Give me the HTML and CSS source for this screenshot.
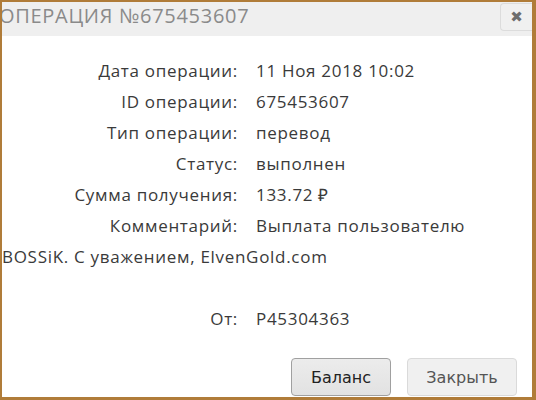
FILE: index.html
```html
<!DOCTYPE html>
<html lang="ru">
  <head>
    <meta charset="UTF-8" />
    <title>Операция №675453607</title>
    <link rel="stylesheet" href="styles.css">
  </head>
  <body>
    <div class="dialog">
      <div class="titlebar">
        <span class="title">Операция №675453607</span>
        <button class="close" title="Закрыть">&#10006;</button>
      </div>
      <div class="content">
        <div class="row"><span class="label">Дата операции:</span>11 Ноя 2018 10:02</div>
        <div class="row"><span class="label">ID операции:</span>675453607</div>
        <div class="row"><span class="label">Тип операции:</span>перевод</div>
        <div class="row"><span class="label">Статус:</span>выполнен</div>
        <div class="row"><span class="label">Сумма получения:</span>133.72 ₽</div>
        <div class="row"><span class="label">Комментарий:</span><span>Выплата пользователю</span> <span>BOSSiK. С уважением, ElvenGold.com</span></div>
        <div class="row empty"></div>
        <div class="row"><span class="label">От:</span>P45304363</div>
      </div>
      <div class="buttons">
        <button class="btn">Баланс</button>
        <button class="btn btn-light">Закрыть</button>
      </div>
    </div>
  </body>
</html>
```

FILE: styles.css
```css
html,
body {
  margin: 0;
  padding: 0;
  background: #fff;
}

.dialog {
  box-sizing: border-box;
  width: 536px;
  height: 400px;
  border: 2px solid #b07c39;
  border-right-width: 4px;
  border-bottom-width: 3px;
  display: flex;
  flex-direction: column;
  overflow: hidden;
}

.titlebar {
  height: 34px;
  background-color: #efefef;
  display: flex;
  align-items: flex-start;
  justify-content: space-between;
}

.title {
  font-family: "Open Sans", sans-serif;
  font-size: 20px;
  letter-spacing: 0.7px;
  text-transform: uppercase;
  color: #8a8a8a;
  line-height: 28px;
  margin-left: -3px;
}

.close {
  margin-top: 1px;
  width: 32px;
  height: 28px;
  border: 1px solid #dcdcdc;
  border-right: none;
  border-radius: 4px 0 0 4px;
  background-color: #f0f0f0;
  color: #6d6d6d;
  font-size: 15px;
  font-weight: bold;
  padding: 0;
  font-family: "DejaVu Sans", sans-serif;
  cursor: pointer;
}

.content {
  flex: 1;
  padding-top: 19px;
  font-family: "Open Sans", sans-serif;
  font-size: 17px;
  letter-spacing: 0.7px;
  color: #3a3a3a;
}

.row {
  line-height: 31px;
}

.empty {
  height: 31px;
}

.label {
  display: inline-block;
  width: 236px;
  padding-right: 18px;
  text-align: right;
}

.buttons {
  display: flex;
  justify-content: flex-end;
  gap: 16px;
  padding: 0 15px 1px 0;
}

.btn {
  width: 100px;
  height: 38px;
  border: 1px solid #a0a0a0;
  border-radius: 4px;
  background: linear-gradient(#ececec, #e2e2e2);
  font-family: "DejaVu Sans", sans-serif;
  font-size: 16px;
  color: #222;
  cursor: pointer;
}

.btn-light {
  width: 110px;
  border-color: #dadada;
  background: #f0f0f0;
  color: #555;
}
```
